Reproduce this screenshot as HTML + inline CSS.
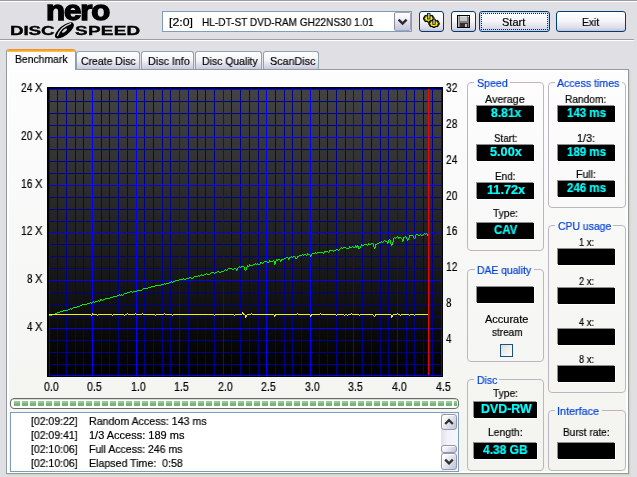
<!DOCTYPE html>
<html><head><meta charset="utf-8"><title>Nero DiscSpeed</title>
<style>
html,body{margin:0;padding:0;}
body{width:637px;height:477px;overflow:hidden;background:#e0dfe3;position:relative;font-family:"Liberation Sans",sans-serif;font-size:11px;color:#000;}
.abs{position:absolute;}
.t{position:absolute;white-space:pre;transform-origin:0 0;will-change:transform;-webkit-text-stroke:0.2px;}
.hl{position:absolute;height:1px;}
.btn{position:absolute;box-sizing:border-box;border:1px solid #003c74;border-radius:3px;background:linear-gradient(#ffffff 0%,#f6f6fa 45%,#dcdbe8 85%,#c4c3d6 100%);}
.tab{position:absolute;box-sizing:border-box;border:1px solid #8fa4b1;border-bottom:none;border-radius:3px 3px 0 0;background:linear-gradient(#ffffff 0%,#f2f2f8 50%,#c9c9dd 100%);}
.grp{position:absolute;box-sizing:border-box;border:1px solid #bdb5bf;border-radius:4px;}
.lcd{position:absolute;background:#000;box-shadow:-1px -1px 0 #8e8e8e,1px 1px 0 #fff;}
.cap{position:absolute;background:#f7f7f5;}
</style></head><body>

<div class="hl" style="left:0;top:0;width:637px;background:#9d9da1"></div>
<div class="hl" style="left:0;top:1px;width:637px;background:#fff"></div>
<div class="hl" style="left:0;top:39px;width:634px;background:#9d9da1"></div>
<div class="hl" style="left:0;top:40px;width:634px;background:#fff"></div>
<div id="logo" class="abs" style="left:0;top:0;width:160px;height:39px;">
<span class="t" style="left:45.9px;top:-9.0px;font-size:28px;line-height:40px;font-weight:bold;letter-spacing:-1.0px;-webkit-text-stroke:1.4px #000;transform:scaleX(1.115);">nero</span>
<span class="t" style="left:10.2px;top:23.2px;font-size:12.6px;line-height:16px;font-weight:bold;letter-spacing:-0.1px;-webkit-text-stroke:0.35px #000;transform:scaleX(1.5);">DISC</span>
<span class="t" style="left:74.9px;top:23.2px;font-size:12.6px;line-height:16px;font-weight:bold;letter-spacing:0.2px;-webkit-text-stroke:0.35px #000;transform:scaleX(1.5);">SPEED</span>
<svg class="abs" style="left:52px;top:20px" width="25" height="20" viewBox="52 20 25 20"><g transform="rotate(-38 64.4 30.4)"><ellipse cx="64.4" cy="30.4" rx="11.4" ry="4.9" fill="#000"/><ellipse cx="64.4" cy="30.7" rx="3" ry="1.2" fill="#e0dfe3"/><path d="M55.3 30.6 Q63 25.2 74 29.0" stroke="#e0dfe3" stroke-width="1.1" fill="none"/></g></svg>
</div>
<div class="abs" style="left:162px;top:11px;width:250px;height:21px;box-sizing:border-box;border:1px solid #7f9db9;background:#fff;"></div>
<span class="t" style="left:168.80px;top:14.69px;font-size:11px;line-height:15px;color:#000;transform:scaleX(1.117);">[2:0]</span>
<span class="t" style="left:201.50px;top:14.69px;font-size:11px;line-height:15px;color:#000;transform:scaleX(0.916);">HL-DT-ST DVD-RAM GH22NS30 1.01</span>
<div class="abs" style="left:394px;top:12px;width:17px;height:19px;box-sizing:border-box;border:1px solid #a4a4b8;border-left-color:#8c8ca0;border-radius:2px;background:linear-gradient(#ffffff 0%,#f4f4f9 30%,#d4d5e4 70%,#c6c8dc 100%);"></div>
<svg class="abs" style="left:394px;top:12px" width="17" height="19" viewBox="394 12 17 19"><path d="M398.6 19.6 L402.6 23.6 L406.6 19.6" stroke="#2a2a2a" stroke-width="2.4" fill="none"/></svg>
<div class="btn" style="left:419px;top:11px;width:25px;height:21px;"></div>
<div class="btn" style="left:451px;top:11px;width:25px;height:21px;"></div>
<div class="btn" style="left:479px;top:11px;width:71px;height:21px;box-shadow:inset 0 0 0 1px #bcd4f6;"></div>
<div class="abs" style="left:481px;top:13px;width:67px;height:17px;box-sizing:border-box;border:1px dotted #222;"></div>
<div class="btn" style="left:556px;top:11px;width:70px;height:21px;"></div>
<span class="t" style="left:502.00px;top:14.69px;font-size:11px;line-height:15px;color:#000;">Start</span>
<span class="t" style="left:581.70px;top:14.69px;font-size:11px;line-height:15px;color:#000;transform:scaleX(0.939);">Exit</span>
<svg class="abs" style="left:419px;top:11px" width="25" height="21" viewBox="419 11 25 21"><polygon points="434.02,17.85 434.02,19.15 432.98,19.22 432.47,20.12 433.14,20.69 431.85,21.61 431.05,21.14 429.80,21.51 429.71,22.24 427.89,22.24 427.80,21.51 426.55,21.14 425.75,21.61 424.46,20.69 425.13,20.12 424.62,19.22 423.58,19.15 423.58,17.85 424.62,17.78 425.13,16.88 424.46,16.31 425.75,15.39 426.55,15.86 427.80,15.49 427.89,14.76 429.71,14.76 429.80,15.49 431.05,15.86 431.85,15.39 433.14,16.31 432.47,16.88 432.98,17.78" fill="#f6f000" stroke="#000" stroke-width="1.1" stroke-linejoin="miter"/><rect x="427.6" y="13.4" width="2.4" height="5.6" fill="#b8b8b8" stroke="#000" stroke-width="0.7"/><polygon points="439.22,22.95 439.22,24.25 438.18,24.32 437.67,25.22 438.34,25.79 437.05,26.71 436.25,26.24 435.00,26.61 434.91,27.34 433.09,27.34 433.00,26.61 431.75,26.24 430.95,26.71 429.66,25.79 430.33,25.22 429.82,24.32 428.78,24.25 428.78,22.95 429.82,22.88 430.33,21.98 429.66,21.41 430.95,20.49 431.75,20.96 433.00,20.59 433.09,19.86 434.91,19.86 435.00,20.59 436.25,20.96 437.05,20.49 438.34,21.41 437.67,21.98 438.18,22.88" fill="#f6f000" stroke="#000" stroke-width="1.1" stroke-linejoin="miter"/><rect x="432.8" y="19.2" width="2.4" height="5.2" fill="#b8b8b8" stroke="#000" stroke-width="0.7"/></svg>
<svg class="abs" style="left:457px;top:15px" width="13" height="13" viewBox="0 0 13 13" shape-rendering="crispEdges">
<rect x="0" y="0" width="13" height="13" fill="#000"/>
<rect x="1" y="1" width="11" height="11" fill="#808080"/>
<rect x="1" y="1" width="1" height="11" fill="#b8b8b8"/>
<rect x="3" y="1" width="7" height="5" fill="#c8c8c8"/>
<rect x="3" y="1" width="7" height="1" fill="#e0e0e0"/>
<rect x="11" y="1" width="1" height="1" fill="#fff"/>
<rect x="3" y="8" width="8" height="4" fill="#303030"/>
<rect x="8" y="9" width="2" height="3" fill="#c0c0c0"/>
</svg>
<div class="abs" style="left:6px;top:69px;width:623px;height:405px;box-sizing:border-box;border:1px solid #919b9c;background:linear-gradient(#fdfdfe 0%,#f8f8f7 40%,#f3f3ef 100%);box-shadow:inset 0 0 0 2px #fff,1px 1px 0 #d4d2c2,2px 2px 0 #dcdbd2;"></div>
<div class="tab" style="left:76px;top:51px;width:64px;height:18px;"></div>
<span class="t" style="left:80.70px;top:53.69px;font-size:11px;line-height:15px;color:#000;transform:scaleX(0.950);">Create Disc</span>
<div class="tab" style="left:141px;top:51px;width:53px;height:18px;"></div>
<span class="t" style="left:147.50px;top:53.69px;font-size:11px;line-height:15px;color:#000;transform:scaleX(0.977);">Disc Info</span>
<div class="tab" style="left:195px;top:51px;width:67px;height:18px;"></div>
<span class="t" style="left:201.50px;top:53.69px;font-size:11px;line-height:15px;color:#000;transform:scaleX(0.949);">Disc Quality</span>
<div class="tab" style="left:263px;top:51px;width:56px;height:18px;"></div>
<span class="t" style="left:269.80px;top:53.69px;font-size:11px;line-height:15px;color:#000;transform:scaleX(0.979);">ScanDisc</span>
<div class="abs" style="left:6px;top:49px;width:70px;height:21px;box-sizing:border-box;border:1px solid #919b9c;border-bottom:none;border-top:none;border-radius:3px 3px 0 0;background:#fcfcfe;overflow:hidden;"><div style="height:3px;background:linear-gradient(#e68b2c,#ffc73c);"></div></div>
<span class="t" style="left:15.00px;top:51.69px;font-size:11px;line-height:15px;color:#000;transform:scaleX(0.944);">Benchmark</span>
<svg class="abs" style="left:47px;top:87px" width="396" height="290" viewBox="47 87 396 290" shape-rendering="crispEdges">
<defs><linearGradient id="cg" x1="0" y1="0" x2="0" y2="1"><stop offset="0" stop-color="#434343"/><stop offset="1" stop-color="#000"/></linearGradient></defs>
<rect x="47" y="87" width="396" height="290" fill="#000"/>
<rect x="49" y="89" width="393" height="287" fill="url(#cg)"/>
<rect x="49" y="89" width="1" height="287" fill="#0000ff"/>
<rect x="57" y="89" width="1" height="287" fill="#000088"/>
<rect x="66" y="89" width="1" height="287" fill="#000088"/>
<rect x="75" y="89" width="1" height="287" fill="#000088"/>
<rect x="83" y="89" width="1" height="287" fill="#000088"/>
<rect x="92" y="89" width="1" height="287" fill="#0000ff"/>
<rect x="101" y="89" width="1" height="287" fill="#000088"/>
<rect x="109" y="89" width="1" height="287" fill="#000088"/>
<rect x="118" y="89" width="1" height="287" fill="#000088"/>
<rect x="127" y="89" width="1" height="287" fill="#000088"/>
<rect x="136" y="89" width="1" height="287" fill="#0000ff"/>
<rect x="144" y="89" width="1" height="287" fill="#000088"/>
<rect x="153" y="89" width="1" height="287" fill="#000088"/>
<rect x="162" y="89" width="1" height="287" fill="#000088"/>
<rect x="170" y="89" width="1" height="287" fill="#000088"/>
<rect x="179" y="89" width="1" height="287" fill="#0000ff"/>
<rect x="188" y="89" width="1" height="287" fill="#000088"/>
<rect x="197" y="89" width="1" height="287" fill="#000088"/>
<rect x="205" y="89" width="1" height="287" fill="#000088"/>
<rect x="214" y="89" width="1" height="287" fill="#000088"/>
<rect x="223" y="89" width="1" height="287" fill="#0000ff"/>
<rect x="231" y="89" width="1" height="287" fill="#000088"/>
<rect x="240" y="89" width="1" height="287" fill="#000088"/>
<rect x="249" y="89" width="1" height="287" fill="#000088"/>
<rect x="258" y="89" width="1" height="287" fill="#000088"/>
<rect x="266" y="89" width="1" height="287" fill="#0000ff"/>
<rect x="275" y="89" width="1" height="287" fill="#000088"/>
<rect x="284" y="89" width="1" height="287" fill="#000088"/>
<rect x="292" y="89" width="1" height="287" fill="#000088"/>
<rect x="301" y="89" width="1" height="287" fill="#000088"/>
<rect x="310" y="89" width="1" height="287" fill="#0000ff"/>
<rect x="319" y="89" width="1" height="287" fill="#000088"/>
<rect x="327" y="89" width="1" height="287" fill="#000088"/>
<rect x="336" y="89" width="1" height="287" fill="#000088"/>
<rect x="345" y="89" width="1" height="287" fill="#000088"/>
<rect x="353" y="89" width="1" height="287" fill="#0000ff"/>
<rect x="362" y="89" width="1" height="287" fill="#000088"/>
<rect x="371" y="89" width="1" height="287" fill="#000088"/>
<rect x="380" y="89" width="1" height="287" fill="#000088"/>
<rect x="388" y="89" width="1" height="287" fill="#000088"/>
<rect x="397" y="89" width="1" height="287" fill="#0000ff"/>
<rect x="406" y="89" width="1" height="287" fill="#000088"/>
<rect x="414" y="89" width="1" height="287" fill="#000088"/>
<rect x="423" y="89" width="1" height="287" fill="#000088"/>
<rect x="432" y="89" width="1" height="287" fill="#000088"/>
<rect x="441" y="89" width="1" height="287" fill="#0000ff"/>
<rect x="49" y="375" width="393" height="1" fill="#0000ff"/>
<rect x="49" y="364" width="393" height="1" fill="#000088"/>
<rect x="49" y="352" width="393" height="1" fill="#000088"/>
<rect x="49" y="340" width="393" height="1" fill="#000088"/>
<rect x="49" y="328" width="393" height="1" fill="#0000ff"/>
<rect x="49" y="316" width="393" height="1" fill="#000088"/>
<rect x="49" y="304" width="393" height="1" fill="#000088"/>
<rect x="49" y="292" width="393" height="1" fill="#000088"/>
<rect x="49" y="280" width="393" height="1" fill="#0000ff"/>
<rect x="49" y="268" width="393" height="1" fill="#000088"/>
<rect x="49" y="256" width="393" height="1" fill="#000088"/>
<rect x="49" y="244" width="393" height="1" fill="#000088"/>
<rect x="49" y="232" width="393" height="1" fill="#0000ff"/>
<rect x="49" y="221" width="393" height="1" fill="#000088"/>
<rect x="49" y="209" width="393" height="1" fill="#000088"/>
<rect x="49" y="197" width="393" height="1" fill="#000088"/>
<rect x="49" y="185" width="393" height="1" fill="#0000ff"/>
<rect x="49" y="173" width="393" height="1" fill="#000088"/>
<rect x="49" y="161" width="393" height="1" fill="#000088"/>
<rect x="49" y="149" width="393" height="1" fill="#000088"/>
<rect x="49" y="137" width="393" height="1" fill="#0000ff"/>
<rect x="49" y="125" width="393" height="1" fill="#000088"/>
<rect x="49" y="113" width="393" height="1" fill="#000088"/>
<rect x="49" y="101" width="393" height="1" fill="#000088"/>
<rect x="49" y="89" width="393" height="1" fill="#0000ff"/>
<rect x="49" y="89" width="1" height="287" fill="#0000ff"/>
<rect x="92" y="89" width="1" height="287" fill="#0000ff"/>
<rect x="136" y="89" width="1" height="287" fill="#0000ff"/>
<rect x="179" y="89" width="1" height="287" fill="#0000ff"/>
<rect x="223" y="89" width="1" height="287" fill="#0000ff"/>
<rect x="266" y="89" width="1" height="287" fill="#0000ff"/>
<rect x="310" y="89" width="1" height="287" fill="#0000ff"/>
<rect x="353" y="89" width="1" height="287" fill="#0000ff"/>
<rect x="397" y="89" width="1" height="287" fill="#0000ff"/>
<rect x="441" y="89" width="1" height="287" fill="#0000ff"/>
</svg>
<svg class="abs" style="left:0;top:0" width="637" height="477" viewBox="0 0 637 477">
<g fill="#00f000" shape-rendering="crispEdges"><rect x="49" y="315" width="1" height="1"/><rect x="50" y="315" width="1" height="1"/><rect x="51" y="315" width="1" height="1"/><rect x="52" y="314" width="1" height="1"/><rect x="53" y="314" width="1" height="1"/><rect x="54" y="314" width="1" height="1"/><rect x="55" y="313" width="1" height="1"/><rect x="56" y="313" width="1" height="1"/><rect x="57" y="312" width="1" height="1"/><rect x="58" y="312" width="1" height="1"/><rect x="59" y="312" width="1" height="1"/><rect x="60" y="311" width="1" height="1"/><rect x="61" y="311" width="1" height="1"/><rect x="62" y="311" width="1" height="1"/><rect x="63" y="310" width="1" height="1"/><rect x="64" y="310" width="1" height="1"/><rect x="65" y="310" width="1" height="1"/><rect x="66" y="310" width="1" height="1"/><rect x="67" y="310" width="1" height="1"/><rect x="68" y="309" width="1" height="1"/><rect x="69" y="309" width="1" height="1"/><rect x="70" y="308" width="1" height="1"/><rect x="71" y="309" width="1" height="1"/><rect x="72" y="308" width="1" height="1"/><rect x="73" y="307" width="1" height="1"/><rect x="74" y="307" width="1" height="1"/><rect x="75" y="307" width="1" height="1"/><rect x="76" y="307" width="1" height="1"/><rect x="77" y="306" width="1" height="1"/><rect x="78" y="306" width="1" height="1"/><rect x="79" y="306" width="1" height="1"/><rect x="80" y="305" width="1" height="1"/><rect x="81" y="305" width="1" height="1"/><rect x="82" y="304" width="1" height="1"/><rect x="83" y="304" width="1" height="1"/><rect x="84" y="304" width="1" height="1"/><rect x="85" y="304" width="1" height="1"/><rect x="86" y="304" width="1" height="1"/><rect x="87" y="303" width="1" height="1"/><rect x="88" y="303" width="1" height="1"/><rect x="89" y="303" width="1" height="1"/><rect x="90" y="302" width="1" height="1"/><rect x="91" y="303" width="1" height="1"/><rect x="92" y="302" width="1" height="1"/><rect x="93" y="301" width="1" height="1"/><rect x="94" y="302" width="1" height="1"/><rect x="95" y="301" width="1" height="1"/><rect x="96" y="301" width="1" height="1"/><rect x="97" y="301" width="1" height="1"/><rect x="98" y="300" width="1" height="1"/><rect x="99" y="301" width="1" height="1"/><rect x="100" y="299" width="1" height="2"/><rect x="101" y="299" width="1" height="1"/><rect x="102" y="300" width="1" height="1"/><rect x="103" y="299" width="1" height="1"/><rect x="104" y="299" width="1" height="1"/><rect x="105" y="298" width="1" height="1"/><rect x="106" y="298" width="1" height="1"/><rect x="107" y="298" width="1" height="1"/><rect x="108" y="298" width="1" height="1"/><rect x="109" y="298" width="1" height="1"/><rect x="110" y="297" width="1" height="1"/><rect x="111" y="297" width="1" height="1"/><rect x="112" y="297" width="1" height="1"/><rect x="113" y="296" width="1" height="1"/><rect x="114" y="296" width="1" height="1"/><rect x="115" y="296" width="1" height="1"/><rect x="116" y="296" width="1" height="1"/><rect x="117" y="295" width="1" height="1"/><rect x="118" y="295" width="1" height="1"/><rect x="119" y="294" width="1" height="1"/><rect x="120" y="295" width="1" height="1"/><rect x="121" y="294" width="1" height="1"/><rect x="122" y="295" width="1" height="1"/><rect x="123" y="294" width="1" height="1"/><rect x="124" y="293" width="1" height="1"/><rect x="125" y="293" width="1" height="1"/><rect x="126" y="293" width="1" height="1"/><rect x="127" y="292" width="1" height="1"/><rect x="128" y="292" width="1" height="1"/><rect x="129" y="292" width="1" height="1"/><rect x="130" y="291" width="1" height="1"/><rect x="131" y="291" width="1" height="1"/><rect x="132" y="292" width="1" height="1"/><rect x="133" y="291" width="1" height="1"/><rect x="134" y="291" width="1" height="1"/><rect x="135" y="291" width="1" height="1"/><rect x="136" y="291" width="1" height="1"/><rect x="137" y="290" width="1" height="1"/><rect x="138" y="290" width="1" height="1"/><rect x="139" y="290" width="1" height="1"/><rect x="140" y="290" width="1" height="1"/><rect x="141" y="290" width="1" height="1"/><rect x="142" y="289" width="1" height="1"/><rect x="143" y="288" width="1" height="1"/><rect x="144" y="288" width="1" height="1"/><rect x="145" y="288" width="1" height="1"/><rect x="146" y="288" width="1" height="1"/><rect x="147" y="288" width="1" height="1"/><rect x="148" y="287" width="1" height="1"/><rect x="149" y="287" width="1" height="1"/><rect x="150" y="287" width="1" height="1"/><rect x="151" y="286" width="1" height="1"/><rect x="152" y="286" width="1" height="1"/><rect x="153" y="286" width="1" height="1"/><rect x="154" y="286" width="1" height="1"/><rect x="155" y="285" width="1" height="1"/><rect x="156" y="285" width="1" height="1"/><rect x="157" y="285" width="1" height="1"/><rect x="158" y="285" width="1" height="1"/><rect x="159" y="285" width="1" height="1"/><rect x="160" y="285" width="1" height="1"/><rect x="161" y="284" width="1" height="1"/><rect x="162" y="284" width="1" height="1"/><rect x="163" y="284" width="1" height="1"/><rect x="164" y="283" width="1" height="1"/><rect x="165" y="284" width="1" height="1"/><rect x="166" y="283" width="1" height="1"/><rect x="167" y="283" width="1" height="1"/><rect x="168" y="283" width="1" height="1"/><rect x="169" y="282" width="1" height="1"/><rect x="170" y="282" width="1" height="1"/><rect x="171" y="281" width="1" height="1"/><rect x="172" y="282" width="1" height="1"/><rect x="173" y="281" width="1" height="1"/><rect x="174" y="281" width="1" height="1"/><rect x="175" y="280" width="1" height="1"/><rect x="176" y="280" width="1" height="1"/><rect x="177" y="280" width="1" height="1"/><rect x="178" y="280" width="1" height="1"/><rect x="179" y="279" width="1" height="1"/><rect x="180" y="279" width="1" height="1"/><rect x="181" y="279" width="1" height="1"/><rect x="182" y="279" width="1" height="1"/><rect x="183" y="278" width="1" height="1"/><rect x="184" y="279" width="1" height="1"/><rect x="185" y="279" width="1" height="1"/><rect x="186" y="278" width="1" height="1"/><rect x="187" y="278" width="1" height="1"/><rect x="188" y="278" width="1" height="1"/><rect x="189" y="277" width="1" height="1"/><rect x="190" y="277" width="1" height="1"/><rect x="191" y="278" width="1" height="1"/><rect x="192" y="278" width="1" height="1"/><rect x="193" y="277" width="1" height="1"/><rect x="194" y="276" width="1" height="1"/><rect x="195" y="276" width="1" height="1"/><rect x="196" y="276" width="1" height="1"/><rect x="197" y="276" width="1" height="1"/><rect x="198" y="275" width="1" height="1"/><rect x="199" y="276" width="1" height="1"/><rect x="200" y="275" width="1" height="1"/><rect x="201" y="274" width="1" height="1"/><rect x="202" y="275" width="1" height="1"/><rect x="203" y="275" width="1" height="1"/><rect x="204" y="274" width="1" height="1"/><rect x="205" y="274" width="1" height="1"/><rect x="206" y="273" width="1" height="1"/><rect x="207" y="274" width="1" height="1"/><rect x="208" y="274" width="1" height="1"/><rect x="209" y="274" width="1" height="1"/><rect x="210" y="273" width="1" height="1"/><rect x="211" y="272" width="1" height="1"/><rect x="212" y="272" width="1" height="1"/><rect x="213" y="272" width="1" height="1"/><rect x="214" y="273" width="1" height="1"/><rect x="215" y="272" width="1" height="1"/><rect x="216" y="272" width="1" height="1"/><rect x="217" y="271" width="1" height="1"/><rect x="218" y="271" width="1" height="1"/><rect x="219" y="272" width="1" height="1"/><rect x="220" y="272" width="1" height="1"/><rect x="221" y="271" width="1" height="1"/><rect x="222" y="271" width="1" height="1"/><rect x="223" y="271" width="1" height="1"/><rect x="224" y="270" width="1" height="1"/><rect x="225" y="269" width="1" height="1"/><rect x="226" y="270" width="1" height="1"/><rect x="227" y="269" width="1" height="1"/><rect x="228" y="268" width="1" height="1"/><rect x="229" y="268" width="1" height="1"/><rect x="230" y="268" width="1" height="1"/><rect x="231" y="268" width="1" height="1"/><rect x="232" y="269" width="1" height="1"/><rect x="233" y="269" width="1" height="1"/><rect x="234" y="268" width="1" height="1"/><rect x="235" y="268" width="1" height="1"/><rect x="236" y="269" width="1" height="2"/><rect x="237" y="268" width="1" height="2"/><rect x="238" y="267" width="1" height="1"/><rect x="239" y="266" width="1" height="1"/><rect x="240" y="267" width="1" height="1"/><rect x="241" y="266" width="1" height="1"/><rect x="242" y="266" width="1" height="1"/><rect x="243" y="266" width="1" height="1"/><rect x="244" y="267" width="1" height="3"/><rect x="245" y="270" width="1" height="1"/><rect x="246" y="267" width="1" height="3"/><rect x="247" y="265" width="1" height="2"/><rect x="248" y="266" width="1" height="1"/><rect x="249" y="264" width="1" height="2"/><rect x="250" y="265" width="1" height="1"/><rect x="251" y="265" width="1" height="1"/><rect x="252" y="265" width="1" height="1"/><rect x="253" y="264" width="1" height="1"/><rect x="254" y="264" width="1" height="1"/><rect x="255" y="263" width="1" height="1"/><rect x="256" y="264" width="1" height="1"/><rect x="257" y="263" width="1" height="1"/><rect x="258" y="264" width="1" height="1"/><rect x="259" y="264" width="1" height="1"/><rect x="260" y="262" width="1" height="2"/><rect x="261" y="262" width="1" height="1"/><rect x="262" y="263" width="1" height="1"/><rect x="263" y="262" width="1" height="1"/><rect x="264" y="261" width="1" height="1"/><rect x="265" y="261" width="1" height="1"/><rect x="266" y="261" width="1" height="1"/><rect x="267" y="262" width="1" height="1"/><rect x="268" y="262" width="1" height="1"/><rect x="269" y="260" width="1" height="2"/><rect x="270" y="261" width="1" height="1"/><rect x="271" y="261" width="1" height="1"/><rect x="272" y="261" width="1" height="1"/><rect x="273" y="260" width="1" height="1"/><rect x="274" y="261" width="1" height="4"/><rect x="275" y="261" width="1" height="3"/><rect x="276" y="259" width="1" height="2"/><rect x="277" y="260" width="1" height="1"/><rect x="278" y="259" width="1" height="1"/><rect x="279" y="259" width="1" height="1"/><rect x="280" y="260" width="1" height="2"/><rect x="281" y="259" width="1" height="2"/><rect x="282" y="259" width="1" height="1"/><rect x="283" y="259" width="1" height="1"/><rect x="284" y="258" width="1" height="1"/><rect x="285" y="258" width="1" height="1"/><rect x="286" y="257" width="1" height="1"/><rect x="287" y="257" width="1" height="1"/><rect x="288" y="258" width="1" height="2"/><rect x="289" y="257" width="1" height="2"/><rect x="290" y="257" width="1" height="1"/><rect x="291" y="256" width="1" height="1"/><rect x="292" y="257" width="1" height="1"/><rect x="293" y="256" width="1" height="1"/><rect x="294" y="256" width="1" height="1"/><rect x="295" y="257" width="1" height="2"/><rect x="296" y="258" width="1" height="1"/><rect x="297" y="256" width="1" height="2"/><rect x="298" y="256" width="1" height="1"/><rect x="299" y="255" width="1" height="1"/><rect x="300" y="255" width="1" height="1"/><rect x="301" y="255" width="1" height="1"/><rect x="302" y="254" width="1" height="1"/><rect x="303" y="255" width="1" height="1"/><rect x="304" y="254" width="1" height="1"/><rect x="305" y="254" width="1" height="1"/><rect x="306" y="255" width="1" height="1"/><rect x="307" y="253" width="1" height="2"/><rect x="308" y="254" width="1" height="1"/><rect x="309" y="254" width="1" height="1"/><rect x="310" y="255" width="1" height="2"/><rect x="311" y="254" width="1" height="2"/><rect x="312" y="253" width="1" height="1"/><rect x="313" y="253" width="1" height="1"/><rect x="314" y="253" width="1" height="1"/><rect x="315" y="252" width="1" height="1"/><rect x="316" y="253" width="1" height="1"/><rect x="317" y="252" width="1" height="1"/><rect x="318" y="252" width="1" height="1"/><rect x="319" y="252" width="1" height="1"/><rect x="320" y="252" width="1" height="1"/><rect x="321" y="252" width="1" height="1"/><rect x="322" y="252" width="1" height="1"/><rect x="323" y="253" width="1" height="1"/><rect x="324" y="251" width="1" height="2"/><rect x="325" y="251" width="1" height="1"/><rect x="326" y="251" width="1" height="1"/><rect x="327" y="251" width="1" height="1"/><rect x="328" y="252" width="1" height="1"/><rect x="329" y="250" width="1" height="2"/><rect x="330" y="250" width="1" height="1"/><rect x="331" y="250" width="1" height="1"/><rect x="332" y="250" width="1" height="1"/><rect x="333" y="251" width="1" height="1"/><rect x="334" y="250" width="1" height="1"/><rect x="335" y="250" width="1" height="1"/><rect x="336" y="249" width="1" height="1"/><rect x="337" y="249" width="1" height="1"/><rect x="338" y="250" width="1" height="1"/><rect x="339" y="249" width="1" height="1"/><rect x="340" y="248" width="1" height="1"/><rect x="341" y="247" width="1" height="1"/><rect x="342" y="248" width="1" height="1"/><rect x="343" y="247" width="1" height="1"/><rect x="344" y="247" width="1" height="1"/><rect x="345" y="247" width="1" height="1"/><rect x="346" y="248" width="1" height="1"/><rect x="347" y="248" width="1" height="1"/><rect x="348" y="248" width="1" height="1"/><rect x="349" y="246" width="1" height="2"/><rect x="350" y="247" width="1" height="1"/><rect x="351" y="247" width="1" height="1"/><rect x="352" y="246" width="1" height="1"/><rect x="353" y="247" width="1" height="1"/><rect x="354" y="247" width="1" height="1"/><rect x="355" y="245" width="1" height="2"/><rect x="356" y="246" width="1" height="2"/><rect x="357" y="245" width="1" height="2"/><rect x="358" y="246" width="1" height="3"/><rect x="359" y="248" width="1" height="1"/><rect x="360" y="246" width="1" height="2"/><rect x="361" y="244" width="1" height="2"/><rect x="362" y="245" width="1" height="1"/><rect x="363" y="245" width="1" height="1"/><rect x="364" y="244" width="1" height="1"/><rect x="365" y="244" width="1" height="1"/><rect x="366" y="244" width="1" height="1"/><rect x="367" y="245" width="1" height="1"/><rect x="368" y="243" width="1" height="2"/><rect x="369" y="244" width="1" height="1"/><rect x="370" y="244" width="1" height="1"/><rect x="371" y="243" width="1" height="1"/><rect x="372" y="243" width="1" height="1"/><rect x="373" y="244" width="1" height="3"/><rect x="374" y="247" width="1" height="2"/><rect x="375" y="244" width="1" height="4"/><rect x="376" y="244" width="1" height="1"/><rect x="377" y="243" width="1" height="1"/><rect x="378" y="243" width="1" height="1"/><rect x="379" y="242" width="1" height="1"/><rect x="380" y="242" width="1" height="1"/><rect x="381" y="241" width="1" height="1"/><rect x="382" y="242" width="1" height="1"/><rect x="383" y="241" width="1" height="1"/><rect x="384" y="240" width="1" height="1"/><rect x="385" y="241" width="1" height="1"/><rect x="386" y="241" width="1" height="1"/><rect x="387" y="242" width="1" height="2"/><rect x="388" y="240" width="1" height="3"/><rect x="389" y="239" width="1" height="1"/><rect x="390" y="240" width="1" height="4"/><rect x="391" y="244" width="1" height="2"/><rect x="392" y="242" width="1" height="3"/><rect x="393" y="238" width="1" height="4"/><rect x="394" y="237" width="1" height="1"/><rect x="395" y="238" width="1" height="1"/><rect x="396" y="237" width="1" height="1"/><rect x="397" y="236" width="1" height="1"/><rect x="398" y="237" width="1" height="2"/><rect x="399" y="237" width="1" height="1"/><rect x="400" y="237" width="1" height="1"/><rect x="401" y="238" width="1" height="1"/><rect x="402" y="239" width="1" height="3"/><rect x="403" y="237" width="1" height="4"/><rect x="404" y="237" width="1" height="1"/><rect x="405" y="236" width="1" height="1"/><rect x="406" y="237" width="1" height="2"/><rect x="407" y="239" width="1" height="2"/><rect x="408" y="238" width="1" height="2"/><rect x="409" y="235" width="1" height="3"/><rect x="410" y="235" width="1" height="1"/><rect x="411" y="235" width="1" height="1"/><rect x="412" y="235" width="1" height="1"/><rect x="413" y="236" width="1" height="2"/><rect x="414" y="238" width="1" height="1"/><rect x="415" y="235" width="1" height="3"/><rect x="416" y="234" width="1" height="1"/><rect x="417" y="234" width="1" height="1"/><rect x="418" y="235" width="1" height="1"/><rect x="419" y="235" width="1" height="1"/><rect x="420" y="234" width="1" height="1"/><rect x="421" y="235" width="1" height="1"/><rect x="422" y="235" width="1" height="1"/><rect x="423" y="234" width="1" height="1"/><rect x="424" y="233" width="1" height="1"/><rect x="425" y="234" width="1" height="1"/><rect x="426" y="233" width="1" height="1"/><rect x="427" y="234" width="1" height="2"/><rect x="428" y="234" width="1" height="1"/></g>
<g fill="#f4f400" shape-rendering="crispEdges"><rect x="49" y="314" width="1" height="1"/><rect x="50" y="314" width="1" height="1"/><rect x="51" y="314" width="1" height="1"/><rect x="52" y="314" width="1" height="1"/><rect x="53" y="314" width="1" height="1"/><rect x="54" y="314" width="1" height="1"/><rect x="55" y="314" width="1" height="1"/><rect x="56" y="314" width="1" height="1"/><rect x="57" y="314" width="1" height="1"/><rect x="58" y="314" width="1" height="1"/><rect x="59" y="314" width="1" height="1"/><rect x="60" y="314" width="1" height="1"/><rect x="61" y="314" width="1" height="1"/><rect x="62" y="314" width="1" height="1"/><rect x="63" y="314" width="1" height="1"/><rect x="64" y="314" width="1" height="1"/><rect x="65" y="314" width="1" height="1"/><rect x="66" y="314" width="1" height="1"/><rect x="67" y="314" width="1" height="1"/><rect x="68" y="314" width="1" height="1"/><rect x="69" y="314" width="1" height="1"/><rect x="70" y="314" width="1" height="1"/><rect x="71" y="314" width="1" height="1"/><rect x="72" y="314" width="1" height="1"/><rect x="73" y="314" width="1" height="1"/><rect x="74" y="314" width="1" height="1"/><rect x="75" y="314" width="1" height="1"/><rect x="76" y="314" width="1" height="1"/><rect x="77" y="314" width="1" height="1"/><rect x="78" y="314" width="1" height="1"/><rect x="79" y="314" width="1" height="1"/><rect x="80" y="314" width="1" height="1"/><rect x="81" y="314" width="1" height="1"/><rect x="82" y="314" width="1" height="1"/><rect x="83" y="314" width="1" height="1"/><rect x="84" y="314" width="1" height="1"/><rect x="85" y="314" width="1" height="1"/><rect x="86" y="314" width="1" height="1"/><rect x="87" y="314" width="1" height="1"/><rect x="88" y="314" width="1" height="1"/><rect x="89" y="314" width="1" height="1"/><rect x="90" y="314" width="1" height="1"/><rect x="91" y="315" width="1" height="1"/><rect x="92" y="313" width="1" height="2"/><rect x="93" y="314" width="1" height="1"/><rect x="94" y="314" width="1" height="1"/><rect x="95" y="314" width="1" height="1"/><rect x="96" y="314" width="1" height="1"/><rect x="97" y="315" width="1" height="1"/><rect x="98" y="314" width="1" height="1"/><rect x="99" y="314" width="1" height="1"/><rect x="100" y="314" width="1" height="1"/><rect x="101" y="314" width="1" height="1"/><rect x="102" y="314" width="1" height="1"/><rect x="103" y="314" width="1" height="1"/><rect x="104" y="314" width="1" height="1"/><rect x="105" y="314" width="1" height="1"/><rect x="106" y="314" width="1" height="1"/><rect x="107" y="314" width="1" height="1"/><rect x="108" y="314" width="1" height="1"/><rect x="109" y="314" width="1" height="1"/><rect x="110" y="314" width="1" height="1"/><rect x="111" y="314" width="1" height="1"/><rect x="112" y="315" width="1" height="1"/><rect x="113" y="314" width="1" height="1"/><rect x="114" y="314" width="1" height="1"/><rect x="115" y="314" width="1" height="1"/><rect x="116" y="314" width="1" height="1"/><rect x="117" y="314" width="1" height="1"/><rect x="118" y="314" width="1" height="1"/><rect x="119" y="314" width="1" height="1"/><rect x="120" y="314" width="1" height="1"/><rect x="121" y="314" width="1" height="1"/><rect x="122" y="314" width="1" height="1"/><rect x="123" y="314" width="1" height="1"/><rect x="124" y="315" width="1" height="1"/><rect x="125" y="314" width="1" height="1"/><rect x="126" y="314" width="1" height="1"/><rect x="127" y="313" width="1" height="1"/><rect x="128" y="314" width="1" height="1"/><rect x="129" y="314" width="1" height="1"/><rect x="130" y="314" width="1" height="1"/><rect x="131" y="314" width="1" height="1"/><rect x="132" y="314" width="1" height="1"/><rect x="133" y="314" width="1" height="1"/><rect x="134" y="314" width="1" height="1"/><rect x="135" y="313" width="1" height="1"/><rect x="136" y="314" width="1" height="1"/><rect x="137" y="314" width="1" height="1"/><rect x="138" y="314" width="1" height="1"/><rect x="139" y="314" width="1" height="1"/><rect x="140" y="314" width="1" height="1"/><rect x="141" y="314" width="1" height="1"/><rect x="142" y="313" width="1" height="1"/><rect x="143" y="314" width="1" height="1"/><rect x="144" y="314" width="1" height="1"/><rect x="145" y="314" width="1" height="1"/><rect x="146" y="314" width="1" height="1"/><rect x="147" y="314" width="1" height="1"/><rect x="148" y="314" width="1" height="1"/><rect x="149" y="314" width="1" height="1"/><rect x="150" y="314" width="1" height="1"/><rect x="151" y="314" width="1" height="1"/><rect x="152" y="314" width="1" height="1"/><rect x="153" y="314" width="1" height="1"/><rect x="154" y="314" width="1" height="1"/><rect x="155" y="315" width="1" height="1"/><rect x="156" y="314" width="1" height="1"/><rect x="157" y="314" width="1" height="1"/><rect x="158" y="314" width="1" height="1"/><rect x="159" y="314" width="1" height="1"/><rect x="160" y="314" width="1" height="1"/><rect x="161" y="314" width="1" height="1"/><rect x="162" y="314" width="1" height="1"/><rect x="163" y="314" width="1" height="1"/><rect x="164" y="313" width="1" height="1"/><rect x="165" y="314" width="1" height="1"/><rect x="166" y="314" width="1" height="1"/><rect x="167" y="314" width="1" height="1"/><rect x="168" y="314" width="1" height="1"/><rect x="169" y="314" width="1" height="1"/><rect x="170" y="314" width="1" height="1"/><rect x="171" y="314" width="1" height="1"/><rect x="172" y="315" width="1" height="1"/><rect x="173" y="314" width="1" height="1"/><rect x="174" y="314" width="1" height="1"/><rect x="175" y="314" width="1" height="1"/><rect x="176" y="314" width="1" height="1"/><rect x="177" y="314" width="1" height="1"/><rect x="178" y="314" width="1" height="1"/><rect x="179" y="314" width="1" height="1"/><rect x="180" y="314" width="1" height="1"/><rect x="181" y="314" width="1" height="1"/><rect x="182" y="314" width="1" height="1"/><rect x="183" y="314" width="1" height="1"/><rect x="184" y="314" width="1" height="1"/><rect x="185" y="314" width="1" height="1"/><rect x="186" y="314" width="1" height="1"/><rect x="187" y="314" width="1" height="1"/><rect x="188" y="314" width="1" height="1"/><rect x="189" y="314" width="1" height="1"/><rect x="190" y="314" width="1" height="1"/><rect x="191" y="314" width="1" height="1"/><rect x="192" y="314" width="1" height="1"/><rect x="193" y="314" width="1" height="1"/><rect x="194" y="314" width="1" height="1"/><rect x="195" y="314" width="1" height="1"/><rect x="196" y="314" width="1" height="1"/><rect x="197" y="314" width="1" height="1"/><rect x="198" y="314" width="1" height="1"/><rect x="199" y="314" width="1" height="1"/><rect x="200" y="314" width="1" height="1"/><rect x="201" y="314" width="1" height="1"/><rect x="202" y="314" width="1" height="1"/><rect x="203" y="314" width="1" height="1"/><rect x="204" y="314" width="1" height="1"/><rect x="205" y="314" width="1" height="1"/><rect x="206" y="314" width="1" height="1"/><rect x="207" y="314" width="1" height="1"/><rect x="208" y="314" width="1" height="1"/><rect x="209" y="314" width="1" height="1"/><rect x="210" y="314" width="1" height="1"/><rect x="211" y="314" width="1" height="1"/><rect x="212" y="314" width="1" height="1"/><rect x="213" y="314" width="1" height="1"/><rect x="214" y="315" width="1" height="1"/><rect x="215" y="314" width="1" height="1"/><rect x="216" y="314" width="1" height="1"/><rect x="217" y="314" width="1" height="1"/><rect x="218" y="314" width="1" height="1"/><rect x="219" y="314" width="1" height="1"/><rect x="220" y="314" width="1" height="1"/><rect x="221" y="314" width="1" height="1"/><rect x="222" y="314" width="1" height="1"/><rect x="223" y="314" width="1" height="1"/><rect x="224" y="314" width="1" height="1"/><rect x="225" y="314" width="1" height="1"/><rect x="226" y="314" width="1" height="1"/><rect x="227" y="314" width="1" height="1"/><rect x="228" y="314" width="1" height="1"/><rect x="229" y="314" width="1" height="1"/><rect x="230" y="314" width="1" height="1"/><rect x="231" y="314" width="1" height="1"/><rect x="232" y="314" width="1" height="1"/><rect x="233" y="314" width="1" height="1"/><rect x="234" y="315" width="1" height="1"/><rect x="235" y="314" width="1" height="1"/><rect x="236" y="314" width="1" height="1"/><rect x="237" y="314" width="1" height="1"/><rect x="238" y="314" width="1" height="1"/><rect x="239" y="314" width="1" height="1"/><rect x="240" y="314" width="1" height="1"/><rect x="241" y="314" width="1" height="1"/><rect x="242" y="312" width="1" height="2"/><rect x="243" y="313" width="1" height="2"/><rect x="244" y="314" width="1" height="1"/><rect x="245" y="315" width="1" height="3"/><rect x="246" y="315" width="1" height="2"/><rect x="247" y="314" width="1" height="1"/><rect x="248" y="314" width="1" height="1"/><rect x="249" y="314" width="1" height="1"/><rect x="250" y="314" width="1" height="1"/><rect x="251" y="313" width="1" height="1"/><rect x="252" y="314" width="1" height="1"/><rect x="253" y="314" width="1" height="1"/><rect x="254" y="314" width="1" height="1"/><rect x="255" y="314" width="1" height="1"/><rect x="256" y="314" width="1" height="1"/><rect x="257" y="314" width="1" height="1"/><rect x="258" y="314" width="1" height="1"/><rect x="259" y="314" width="1" height="1"/><rect x="260" y="314" width="1" height="1"/><rect x="261" y="314" width="1" height="1"/><rect x="262" y="314" width="1" height="1"/><rect x="263" y="314" width="1" height="1"/><rect x="264" y="314" width="1" height="1"/><rect x="265" y="314" width="1" height="1"/><rect x="266" y="314" width="1" height="1"/><rect x="267" y="314" width="1" height="1"/><rect x="268" y="314" width="1" height="1"/><rect x="269" y="314" width="1" height="1"/><rect x="270" y="314" width="1" height="1"/><rect x="271" y="314" width="1" height="1"/><rect x="272" y="314" width="1" height="1"/><rect x="273" y="314" width="1" height="1"/><rect x="274" y="315" width="1" height="2"/><rect x="275" y="314" width="1" height="2"/><rect x="276" y="314" width="1" height="1"/><rect x="277" y="314" width="1" height="1"/><rect x="278" y="314" width="1" height="1"/><rect x="279" y="314" width="1" height="1"/><rect x="280" y="314" width="1" height="1"/><rect x="281" y="314" width="1" height="1"/><rect x="282" y="314" width="1" height="1"/><rect x="283" y="314" width="1" height="1"/><rect x="284" y="314" width="1" height="1"/><rect x="285" y="314" width="1" height="1"/><rect x="286" y="314" width="1" height="1"/><rect x="287" y="314" width="1" height="1"/><rect x="288" y="314" width="1" height="1"/><rect x="289" y="314" width="1" height="1"/><rect x="290" y="314" width="1" height="1"/><rect x="291" y="314" width="1" height="1"/><rect x="292" y="314" width="1" height="1"/><rect x="293" y="314" width="1" height="1"/><rect x="294" y="314" width="1" height="1"/><rect x="295" y="314" width="1" height="1"/><rect x="296" y="314" width="1" height="1"/><rect x="297" y="313" width="1" height="1"/><rect x="298" y="314" width="1" height="1"/><rect x="299" y="314" width="1" height="1"/><rect x="300" y="314" width="1" height="1"/><rect x="301" y="314" width="1" height="1"/><rect x="302" y="314" width="1" height="1"/><rect x="303" y="314" width="1" height="1"/><rect x="304" y="314" width="1" height="1"/><rect x="305" y="314" width="1" height="1"/><rect x="306" y="314" width="1" height="1"/><rect x="307" y="314" width="1" height="1"/><rect x="308" y="314" width="1" height="1"/><rect x="309" y="314" width="1" height="1"/><rect x="310" y="315" width="1" height="2"/><rect x="311" y="314" width="1" height="2"/><rect x="312" y="314" width="1" height="1"/><rect x="313" y="314" width="1" height="1"/><rect x="314" y="314" width="1" height="1"/><rect x="315" y="314" width="1" height="1"/><rect x="316" y="314" width="1" height="1"/><rect x="317" y="314" width="1" height="1"/><rect x="318" y="314" width="1" height="1"/><rect x="319" y="314" width="1" height="1"/><rect x="320" y="313" width="1" height="1"/><rect x="321" y="314" width="1" height="1"/><rect x="322" y="314" width="1" height="1"/><rect x="323" y="314" width="1" height="1"/><rect x="324" y="314" width="1" height="1"/><rect x="325" y="314" width="1" height="1"/><rect x="326" y="314" width="1" height="1"/><rect x="327" y="314" width="1" height="1"/><rect x="328" y="314" width="1" height="1"/><rect x="329" y="314" width="1" height="1"/><rect x="330" y="314" width="1" height="1"/><rect x="331" y="314" width="1" height="1"/><rect x="332" y="314" width="1" height="1"/><rect x="333" y="314" width="1" height="1"/><rect x="334" y="314" width="1" height="1"/><rect x="335" y="314" width="1" height="1"/><rect x="336" y="315" width="1" height="1"/><rect x="337" y="314" width="1" height="1"/><rect x="338" y="314" width="1" height="1"/><rect x="339" y="314" width="1" height="1"/><rect x="340" y="314" width="1" height="1"/><rect x="341" y="314" width="1" height="1"/><rect x="342" y="314" width="1" height="1"/><rect x="343" y="314" width="1" height="1"/><rect x="344" y="315" width="1" height="1"/><rect x="345" y="314" width="1" height="1"/><rect x="346" y="314" width="1" height="1"/><rect x="347" y="315" width="1" height="1"/><rect x="348" y="314" width="1" height="1"/><rect x="349" y="314" width="1" height="1"/><rect x="350" y="314" width="1" height="1"/><rect x="351" y="313" width="1" height="1"/><rect x="352" y="314" width="1" height="1"/><rect x="353" y="314" width="1" height="1"/><rect x="354" y="314" width="1" height="1"/><rect x="355" y="314" width="1" height="1"/><rect x="356" y="314" width="1" height="1"/><rect x="357" y="314" width="1" height="1"/><rect x="358" y="314" width="1" height="1"/><rect x="359" y="315" width="1" height="1"/><rect x="360" y="314" width="1" height="1"/><rect x="361" y="314" width="1" height="1"/><rect x="362" y="314" width="1" height="1"/><rect x="363" y="314" width="1" height="1"/><rect x="364" y="314" width="1" height="1"/><rect x="365" y="314" width="1" height="1"/><rect x="366" y="314" width="1" height="1"/><rect x="367" y="314" width="1" height="1"/><rect x="368" y="314" width="1" height="1"/><rect x="369" y="314" width="1" height="1"/><rect x="370" y="314" width="1" height="1"/><rect x="371" y="314" width="1" height="1"/><rect x="372" y="314" width="1" height="1"/><rect x="373" y="315" width="1" height="1"/><rect x="374" y="316" width="1" height="1"/><rect x="375" y="314" width="1" height="2"/><rect x="376" y="314" width="1" height="1"/><rect x="377" y="314" width="1" height="1"/><rect x="378" y="314" width="1" height="1"/><rect x="379" y="314" width="1" height="1"/><rect x="380" y="314" width="1" height="1"/><rect x="381" y="314" width="1" height="1"/><rect x="382" y="314" width="1" height="1"/><rect x="383" y="314" width="1" height="1"/><rect x="384" y="314" width="1" height="1"/><rect x="385" y="314" width="1" height="1"/><rect x="386" y="314" width="1" height="1"/><rect x="387" y="314" width="1" height="1"/><rect x="388" y="314" width="1" height="1"/><rect x="389" y="314" width="1" height="1"/><rect x="390" y="314" width="1" height="1"/><rect x="391" y="315" width="1" height="3"/><rect x="392" y="315" width="1" height="2"/><rect x="393" y="314" width="1" height="1"/><rect x="394" y="314" width="1" height="1"/><rect x="395" y="314" width="1" height="1"/><rect x="396" y="314" width="1" height="1"/><rect x="397" y="313" width="1" height="1"/><rect x="398" y="314" width="1" height="1"/><rect x="399" y="314" width="1" height="1"/><rect x="400" y="315" width="1" height="1"/><rect x="401" y="314" width="1" height="1"/><rect x="402" y="314" width="1" height="1"/><rect x="403" y="314" width="1" height="1"/><rect x="404" y="314" width="1" height="1"/><rect x="405" y="314" width="1" height="1"/><rect x="406" y="314" width="1" height="1"/><rect x="407" y="314" width="1" height="1"/><rect x="408" y="314" width="1" height="1"/><rect x="409" y="315" width="1" height="1"/><rect x="410" y="314" width="1" height="1"/><rect x="411" y="314" width="1" height="1"/><rect x="412" y="314" width="1" height="1"/><rect x="413" y="314" width="1" height="1"/><rect x="414" y="315" width="1" height="1"/><rect x="415" y="314" width="1" height="1"/><rect x="416" y="314" width="1" height="1"/><rect x="417" y="314" width="1" height="1"/><rect x="418" y="314" width="1" height="1"/><rect x="419" y="314" width="1" height="1"/><rect x="420" y="314" width="1" height="1"/><rect x="421" y="314" width="1" height="1"/><rect x="422" y="314" width="1" height="1"/><rect x="423" y="314" width="1" height="1"/><rect x="424" y="314" width="1" height="1"/><rect x="425" y="314" width="1" height="1"/><rect x="426" y="314" width="1" height="1"/><rect x="427" y="314" width="1" height="1"/><rect x="428" y="314" width="1" height="1"/></g>
<rect x="428" y="89" width="1.3" height="286" fill="#f00000"/>
</svg>
<span class="t" style="left:20.80px;top:79.84px;font-size:12px;line-height:16px;color:#000;transform:scaleX(0.856);">24</span>
<span class="t" style="left:34.90px;top:79.84px;font-size:12px;line-height:16px;color:#000;transform:scaleX(0.927);">X</span>
<span class="t" style="left:20.80px;top:127.84px;font-size:12px;line-height:16px;color:#000;transform:scaleX(0.856);">20</span>
<span class="t" style="left:34.90px;top:127.84px;font-size:12px;line-height:16px;color:#000;transform:scaleX(0.927);">X</span>
<span class="t" style="left:20.80px;top:175.84px;font-size:12px;line-height:16px;color:#000;transform:scaleX(0.856);">16</span>
<span class="t" style="left:34.90px;top:175.84px;font-size:12px;line-height:16px;color:#000;transform:scaleX(0.927);">X</span>
<span class="t" style="left:20.80px;top:222.84px;font-size:12px;line-height:16px;color:#000;transform:scaleX(0.856);">12</span>
<span class="t" style="left:34.90px;top:222.84px;font-size:12px;line-height:16px;color:#000;transform:scaleX(0.927);">X</span>
<span class="t" style="left:26.80px;top:270.84px;font-size:12px;line-height:16px;color:#000;transform:scaleX(0.811);">8</span>
<span class="t" style="left:34.90px;top:270.84px;font-size:12px;line-height:16px;color:#000;transform:scaleX(0.927);">X</span>
<span class="t" style="left:26.80px;top:318.84px;font-size:12px;line-height:16px;color:#000;transform:scaleX(0.811);">4</span>
<span class="t" style="left:34.90px;top:318.84px;font-size:12px;line-height:16px;color:#000;transform:scaleX(0.927);">X</span>
<span class="t" style="left:445.70px;top:79.84px;font-size:12px;line-height:16px;color:#000;transform:scaleX(0.856);">32</span>
<span class="t" style="left:445.70px;top:115.84px;font-size:12px;line-height:16px;color:#000;transform:scaleX(0.856);">28</span>
<span class="t" style="left:445.70px;top:151.84px;font-size:12px;line-height:16px;color:#000;transform:scaleX(0.856);">24</span>
<span class="t" style="left:445.70px;top:187.84px;font-size:12px;line-height:16px;color:#000;transform:scaleX(0.856);">20</span>
<span class="t" style="left:445.70px;top:222.84px;font-size:12px;line-height:16px;color:#000;transform:scaleX(0.856);">16</span>
<span class="t" style="left:445.70px;top:258.84px;font-size:12px;line-height:16px;color:#000;transform:scaleX(0.856);">12</span>
<span class="t" style="left:445.70px;top:294.84px;font-size:12px;line-height:16px;color:#000;transform:scaleX(0.811);">8</span>
<span class="t" style="left:445.70px;top:330.84px;font-size:12px;line-height:16px;color:#000;transform:scaleX(0.811);">4</span>
<span class="t" style="left:43.60px;top:378.84px;font-size:12px;line-height:16px;color:#000;transform:scaleX(0.887);">0.0</span>
<span class="t" style="left:86.60px;top:378.84px;font-size:12px;line-height:16px;color:#000;transform:scaleX(0.887);">0.5</span>
<span class="t" style="left:130.60px;top:378.84px;font-size:12px;line-height:16px;color:#000;transform:scaleX(0.887);">1.0</span>
<span class="t" style="left:173.60px;top:378.84px;font-size:12px;line-height:16px;color:#000;transform:scaleX(0.887);">1.5</span>
<span class="t" style="left:217.60px;top:378.84px;font-size:12px;line-height:16px;color:#000;transform:scaleX(0.887);">2.0</span>
<span class="t" style="left:260.60px;top:378.84px;font-size:12px;line-height:16px;color:#000;transform:scaleX(0.887);">2.5</span>
<span class="t" style="left:304.60px;top:378.84px;font-size:12px;line-height:16px;color:#000;transform:scaleX(0.887);">3.0</span>
<span class="t" style="left:347.60px;top:378.84px;font-size:12px;line-height:16px;color:#000;transform:scaleX(0.887);">3.5</span>
<span class="t" style="left:391.60px;top:378.84px;font-size:12px;line-height:16px;color:#000;transform:scaleX(0.887);">4.0</span>
<span class="t" style="left:435.60px;top:378.84px;font-size:12px;line-height:16px;color:#000;transform:scaleX(0.887);">4.5</span>
<div class="abs" style="left:10px;top:398px;width:449px;height:11px;box-sizing:border-box;border:1px solid #6a6a6a;border-radius:4px;background:#fff;box-shadow:inset 0 1px 0 #d8d8d8;"></div>
<svg class="abs" style="left:0;top:0" width="637" height="477" viewBox="0 0 637 477" shape-rendering="crispEdges"><defs><linearGradient id="pg" x1="0" y1="0" x2="0" y2="1"><stop offset="0" stop-color="#a0d0a0"/><stop offset="0.4" stop-color="#8cc48c"/><stop offset="0.6" stop-color="#6cb06c"/><stop offset="1" stop-color="#7cbc7c"/></linearGradient></defs><g fill="url(#pg)"><rect x="14" y="401" width="6" height="5"/><rect x="22" y="401" width="6" height="5"/><rect x="30" y="401" width="6" height="5"/><rect x="38" y="401" width="6" height="5"/><rect x="46" y="401" width="6" height="5"/><rect x="54" y="401" width="6" height="5"/><rect x="62" y="401" width="6" height="5"/><rect x="70" y="401" width="6" height="5"/><rect x="78" y="401" width="6" height="5"/><rect x="86" y="401" width="6" height="5"/><rect x="94" y="401" width="6" height="5"/><rect x="102" y="401" width="6" height="5"/><rect x="110" y="401" width="6" height="5"/><rect x="118" y="401" width="6" height="5"/><rect x="126" y="401" width="6" height="5"/><rect x="134" y="401" width="6" height="5"/><rect x="142" y="401" width="6" height="5"/><rect x="150" y="401" width="6" height="5"/><rect x="158" y="401" width="6" height="5"/><rect x="166" y="401" width="6" height="5"/><rect x="174" y="401" width="6" height="5"/><rect x="182" y="401" width="6" height="5"/><rect x="190" y="401" width="6" height="5"/><rect x="198" y="401" width="6" height="5"/><rect x="206" y="401" width="6" height="5"/><rect x="214" y="401" width="6" height="5"/><rect x="222" y="401" width="6" height="5"/><rect x="230" y="401" width="6" height="5"/><rect x="238" y="401" width="6" height="5"/><rect x="246" y="401" width="6" height="5"/><rect x="254" y="401" width="6" height="5"/><rect x="262" y="401" width="6" height="5"/><rect x="270" y="401" width="6" height="5"/><rect x="278" y="401" width="6" height="5"/><rect x="286" y="401" width="6" height="5"/><rect x="294" y="401" width="6" height="5"/><rect x="302" y="401" width="6" height="5"/><rect x="310" y="401" width="6" height="5"/><rect x="318" y="401" width="6" height="5"/><rect x="326" y="401" width="6" height="5"/><rect x="334" y="401" width="6" height="5"/><rect x="342" y="401" width="6" height="5"/><rect x="350" y="401" width="6" height="5"/><rect x="358" y="401" width="6" height="5"/><rect x="366" y="401" width="6" height="5"/><rect x="374" y="401" width="6" height="5"/><rect x="382" y="401" width="6" height="5"/><rect x="390" y="401" width="6" height="5"/><rect x="398" y="401" width="6" height="5"/><rect x="406" y="401" width="6" height="5"/><rect x="414" y="401" width="6" height="5"/><rect x="422" y="401" width="6" height="5"/><rect x="430" y="401" width="6" height="5"/><rect x="438" y="401" width="6" height="5"/><rect x="446" y="401" width="6" height="5"/><rect x="454" y="401" width="3" height="5"/></g></svg>
<div class="abs" style="left:10px;top:412px;width:449px;height:60px;box-sizing:border-box;border:1px solid #7f9db9;background:#fff;"></div>
<span class="t" style="left:31.00px;top:413.69px;font-size:11px;line-height:15px;color:#000;transform:scaleX(0.952);">[02:09:22]</span>
<span class="t" style="left:88.80px;top:413.69px;font-size:11px;line-height:15px;color:#000;transform:scaleX(0.967);">Random Access: 143 ms</span>
<span class="t" style="left:31.00px;top:427.69px;font-size:11px;line-height:15px;color:#000;transform:scaleX(0.952);">[02:09:41]</span>
<span class="t" style="left:88.80px;top:427.69px;font-size:11px;line-height:15px;color:#000;">1/3 Access: 189 ms</span>
<span class="t" style="left:31.00px;top:441.69px;font-size:11px;line-height:15px;color:#000;transform:scaleX(0.952);">[02:10:06]</span>
<span class="t" style="left:88.80px;top:441.69px;font-size:11px;line-height:15px;color:#000;transform:scaleX(0.955);">Full Access: 246 ms</span>
<span class="t" style="left:31.00px;top:455.69px;font-size:11px;line-height:15px;color:#000;transform:scaleX(0.952);">[02:10:06]</span>
<span class="t" style="left:88.80px;top:455.69px;font-size:11px;line-height:15px;color:#000;transform:scaleX(0.965);">Elapsed Time:  0:58</span>
<div class="abs" style="left:441px;top:413px;width:17px;height:58px;background:linear-gradient(90deg,#e2e2ec,#f2f2f8 40%,#f6f6fa);"></div>
<div class="abs" style="left:441px;top:414px;width:16px;height:16px;box-sizing:border-box;border:1px solid #9496ac;border-radius:3px;background:linear-gradient(125deg,#ffffff 10%,#e2e4ee 50%,#c2c6da 95%);box-shadow:inset 1px 1px 0 #fff;"></div>
<svg class="abs" style="left:441px;top:414px" width="16" height="16" viewBox="0 0 16 16"><path d="M4.2 10 L8 6.2 L11.8 10" stroke="#303030" stroke-width="2.3" fill="none"/></svg>
<div class="abs" style="left:441px;top:445px;width:16px;height:8px;box-sizing:border-box;border:1px solid #9496ac;border-radius:3px;background:linear-gradient(125deg,#ffffff 10%,#e2e4ee 50%,#c2c6da 95%);box-shadow:inset 1px 1px 0 #fff;"></div>
<div class="abs" style="left:441px;top:453px;width:16px;height:17px;box-sizing:border-box;border:1px solid #9496ac;border-radius:3px;background:linear-gradient(125deg,#ffffff 10%,#e2e4ee 50%,#c2c6da 95%);box-shadow:inset 1px 1px 0 #fff;"></div>
<svg class="abs" style="left:441px;top:453px" width="16" height="17" viewBox="0 0 16 17"><path d="M4.2 6.6 L8 10.4 L11.8 6.6" stroke="#303030" stroke-width="2.3" fill="none"/></svg>
<div class="grp" style="left:467px;top:82px;width:77px;height:169px;"></div>
<div class="cap" style="left:474.3px;top:81px;width:35.7px;height:3px;background:#fdfdfd;"></div>
<span class="t" style="left:476.80px;top:75.69px;font-size:11px;line-height:15px;color:#0040d8;transform:scaleX(0.966);">Speed</span>
<span class="t" style="left:485.30px;top:91.69px;font-size:11px;line-height:15px;color:#000;transform:scaleX(0.972);">Average</span>
<div class="lcd" style="left:477px;top:106px;width:57px;height:16px;"></div>
<span class="t" style="left:490.70px;top:104.50px;font-size:12.4px;line-height:16.4px;color:#00ffff;font-weight:bold;transform:scaleX(0.979);">8.81x</span>
<span class="t" style="left:493.80px;top:130.69px;font-size:11px;line-height:15px;color:#000;transform:scaleX(0.890);">Start:</span>
<div class="lcd" style="left:477px;top:145px;width:57px;height:16px;"></div>
<span class="t" style="left:490.07px;top:143.50px;font-size:12.4px;line-height:16.4px;color:#00ffff;font-weight:bold;transform:scaleX(1.026);">5.00x</span>
<span class="t" style="left:494.55px;top:168.69px;font-size:11px;line-height:15px;color:#000;transform:scaleX(0.907);">End:</span>
<div class="lcd" style="left:477px;top:183px;width:57px;height:16px;"></div>
<span class="t" style="left:486.89px;top:181.50px;font-size:12.4px;line-height:16.4px;color:#00ffff;font-weight:bold;transform:scaleX(1.026);">11.72x</span>
<span class="t" style="left:493.35px;top:205.69px;font-size:11px;line-height:15px;color:#000;transform:scaleX(0.933);">Type:</span>
<div class="lcd" style="left:477px;top:223px;width:57px;height:16px;"></div>
<span class="t" style="left:493.90px;top:221.50px;font-size:12.4px;line-height:16.4px;color:#00ffff;font-weight:bold;transform:scaleX(0.923);">CAV</span>
<div class="grp" style="left:548px;top:82px;width:78px;height:126px;"></div>
<div class="cap" style="left:554.5px;top:81px;width:67.3px;height:3px;background:#fdfdfd;"></div>
<span class="t" style="left:557.00px;top:75.69px;font-size:11px;line-height:15px;color:#0040d8;transform:scaleX(0.962);">Access times</span>
<span class="t" style="left:564.80px;top:91.69px;font-size:11px;line-height:15px;color:#000;transform:scaleX(0.923);">Random:</span>
<div class="lcd" style="left:558px;top:106px;width:57px;height:16px;"></div>
<span class="t" style="left:567.00px;top:104.50px;font-size:12.4px;line-height:16.4px;color:#00ffff;font-weight:bold;transform:scaleX(0.928);">143 ms</span>
<span class="t" style="left:577.00px;top:130.69px;font-size:11px;line-height:15px;color:#000;transform:scaleX(0.980);">1/3:</span>
<div class="lcd" style="left:558px;top:145px;width:57px;height:16px;"></div>
<span class="t" style="left:567.00px;top:143.50px;font-size:12.4px;line-height:16.4px;color:#00ffff;font-weight:bold;transform:scaleX(0.928);">189 ms</span>
<span class="t" style="left:576.00px;top:166.69px;font-size:11px;line-height:15px;color:#000;transform:scaleX(0.962);">Full:</span>
<div class="lcd" style="left:558px;top:181px;width:57px;height:16px;"></div>
<span class="t" style="left:567.00px;top:179.50px;font-size:12.4px;line-height:16.4px;color:#00ffff;font-weight:bold;transform:scaleX(0.928);">246 ms</span>
<div class="grp" style="left:548px;top:225px;width:78px;height:168px;"></div>
<div class="cap" style="left:555.3px;top:224px;width:58.2px;height:3px;background:#f8f8f7;"></div>
<span class="t" style="left:557.80px;top:218.69px;font-size:11px;line-height:15px;color:#0040d8;transform:scaleX(0.946);">CPU usage</span>
<span class="t" style="left:579.00px;top:234.69px;font-size:11px;line-height:15px;color:#000;transform:scaleX(0.847);">1 x:</span>
<div class="lcd" style="left:558px;top:249px;width:57px;height:16px;"></div>
<span class="t" style="left:579.00px;top:273.69px;font-size:11px;line-height:15px;color:#000;transform:scaleX(0.847);">2 x:</span>
<div class="lcd" style="left:558px;top:288px;width:57px;height:16px;"></div>
<span class="t" style="left:579.00px;top:314.69px;font-size:11px;line-height:15px;color:#000;transform:scaleX(0.847);">4 x:</span>
<div class="lcd" style="left:558px;top:329px;width:57px;height:16px;"></div>
<span class="t" style="left:579.00px;top:351.69px;font-size:11px;line-height:15px;color:#000;transform:scaleX(0.847);">8 x:</span>
<div class="lcd" style="left:558px;top:366px;width:57px;height:16px;"></div>
<div class="grp" style="left:467px;top:269px;width:77px;height:93px;"></div>
<div class="cap" style="left:474.5px;top:268px;width:59.0px;height:3px;background:#f7f7f6;"></div>
<span class="t" style="left:477.00px;top:262.69px;font-size:11px;line-height:15px;color:#0040d8;transform:scaleX(0.940);">DAE quality</span>
<div class="lcd" style="left:477px;top:287px;width:57px;height:16px;"></div>
<span class="t" style="left:484.85px;top:311.69px;font-size:11px;line-height:15px;color:#000;">Accurate</span>
<span class="t" style="left:491.60px;top:324.69px;font-size:11px;line-height:15px;color:#000;transform:scaleX(0.911);">stream</span>
<div class="abs" style="left:500px;top:344px;width:13px;height:13px;box-sizing:border-box;border:1px solid #1c5180;background:linear-gradient(135deg,#dcdcd7,#fff);"></div>
<div class="grp" style="left:467px;top:379px;width:77px;height:92px;"></div>
<div class="cap" style="left:474.3px;top:378px;width:25.2px;height:3px;background:#f5f5f2;"></div>
<span class="t" style="left:476.80px;top:372.69px;font-size:11px;line-height:15px;color:#0040d8;transform:scaleX(0.944);">Disc</span>
<span class="t" style="left:493.35px;top:385.69px;font-size:11px;line-height:15px;color:#000;transform:scaleX(0.933);">Type:</span>
<div class="lcd" style="left:474px;top:402px;width:63px;height:16px;"></div>
<span class="t" style="left:481.00px;top:400.50px;font-size:12.4px;line-height:16.4px;color:#00ffff;font-weight:bold;">DVD-RW</span>
<span class="t" style="left:487.60px;top:424.69px;font-size:11px;line-height:15px;color:#000;transform:scaleX(0.943);">Length:</span>
<div class="lcd" style="left:474px;top:443px;width:63px;height:16px;"></div>
<span class="t" style="left:483.20px;top:441.50px;font-size:12.4px;line-height:16.4px;color:#00ffff;font-weight:bold;transform:scaleX(0.966);">4.38 GB</span>
<div class="grp" style="left:548px;top:410px;width:78px;height:61px;"></div>
<div class="cap" style="left:554.9px;top:409px;width:47.0px;height:3px;background:#f4f4f1;"></div>
<span class="t" style="left:557.40px;top:403.69px;font-size:11px;line-height:15px;color:#0040d8;transform:scaleX(0.982);">Interface</span>
<span class="t" style="left:562.90px;top:424.69px;font-size:11px;line-height:15px;color:#000;transform:scaleX(0.918);">Burst rate:</span>
<div class="lcd" style="left:558px;top:443px;width:57px;height:16px;"></div>
</body></html>
